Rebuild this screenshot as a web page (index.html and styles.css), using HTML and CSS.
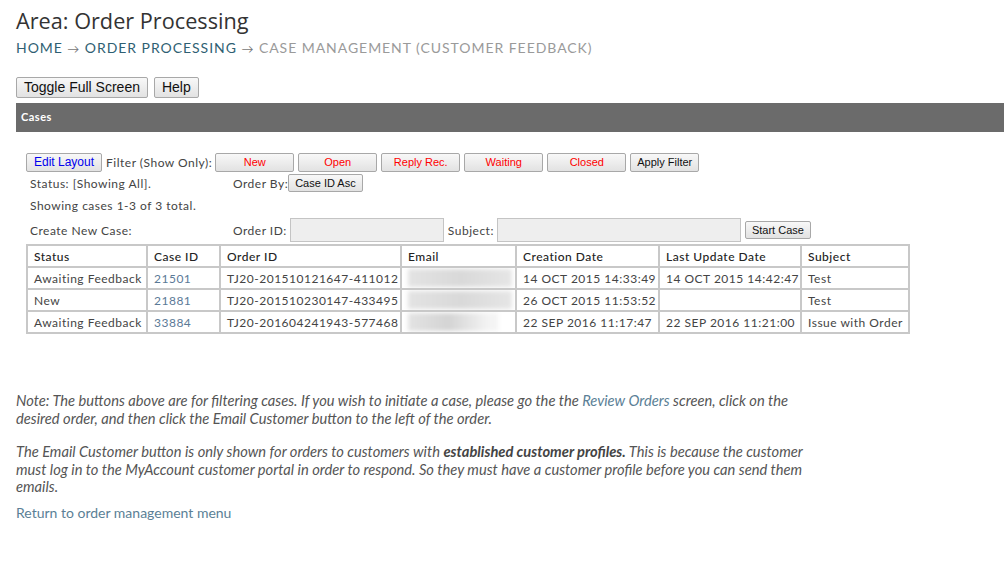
FILE: index.html
```html
<!DOCTYPE html>
<html lang="en">
<head>
    <meta charset="UTF-8">
    <title>Case Management</title>
    <link rel="stylesheet" href="styles.css">
</head>
<body>
<div class="page">
    <h1 class="title">Area: Order Processing</h1>
    <div class="crumbs">
        <a href="#">Home</a> <span class="arrow">&rarr;</span>
        <a href="#">Order Processing</a> <span class="arrow">&rarr;</span>
        <span class="current">Case Management (Customer Feedback)</span>
    </div>

    <div class="top-buttons">
        <button class="btn">Toggle Full Screen</button>
        <button class="btn">Help</button>
    </div>

    <div class="panel-head">Cases</div>

    <div class="panel-body">
        <div class="line filter-line">
            <button class="btn small blue">Edit Layout</button>
            <span class="filter-lbl">Filter (Show Only):</span>
            <button class="btn small red wide">New</button>
            <button class="btn small red wide">Open</button>
            <button class="btn small red wide">Reply Rec.</button>
            <button class="btn small red wide">Waiting</button>
            <button class="btn small red wide">Closed</button>
            <button class="btn small">Apply Filter</button>
        </div>
        <div class="line grid-line">
            <span class="lbl">Status: [Showing All].</span>
            <span>Order By:</span><button class="btn small">Case ID Asc</button>
        </div>
        <div class="line">Showing cases 1-3 of 3 total.</div>
        <div class="line grid-line create">
            <span class="lbl">Create New Case:</span>
            <span>Order ID:</span><input class="field order" type="text">
            <span>Subject:</span><input class="field subject" type="text">
            <button class="btn small">Start Case</button>
        </div>

        <table class="cases">
            <thead>
                <tr>
                    <th class="c-status">Status</th>
                    <th class="c-id">Case ID</th>
                    <th class="c-order">Order ID</th>
                    <th class="c-email">Email</th>
                    <th class="c-created">Creation Date</th>
                    <th class="c-updated">Last Update Date</th>
                    <th class="c-subject">Subject</th>
                </tr>
            </thead>
            <tbody>
                <tr>
                    <td>Awaiting Feedback</td>
                    <td><a href="#">21501</a></td>
                    <td>TJ20-201510121647-411012</td>
                    <td><div class="blur"></div></td>
                    <td>14 OCT 2015 14:33:49</td>
                    <td>14 OCT 2015 14:42:47</td>
                    <td>Test</td>
                </tr>
                <tr>
                    <td>New</td>
                    <td><a href="#">21881</a></td>
                    <td>TJ20-201510230147-433495</td>
                    <td><div class="blur"></div></td>
                    <td>26 OCT 2015 11:53:52</td>
                    <td></td>
                    <td>Test</td>
                </tr>
                <tr>
                    <td>Awaiting Feedback</td>
                    <td><a href="#">33884</a></td>
                    <td>TJ20-201604241943-577468</td>
                    <td><div class="blur short"></div></td>
                    <td>22 SEP 2016 11:17:47</td>
                    <td>22 SEP 2016 11:21:00</td>
                    <td>Issue with Order</td>
                </tr>
            </tbody>
        </table>
    </div>

    <div class="notes">
        <p>Note: The buttons above are for filtering cases. If you wish to initiate a case, please go the the <a href="#">Review Orders</a> screen, click on the desired order, and then click the Email Customer button to the left of the order.</p>
        <p>The Email Customer button is only shown for orders to customers with <b>established customer profiles.</b> This is because the customer must log in to the MyAccount customer portal in order to respond. So they must have a customer profile before you can send them emails.</p>
    </div>
    <a class="back" href="#">Return to order management menu</a>
</div>
</body>
</html>
```

FILE: styles.css
```css
body {
    margin: 0;
    background: #ffffff;
    font-family: Lato, "Open Sans", sans-serif;
    color: #444444;
    overflow: hidden;
}

.page {
    padding: 0 0 0 16px;
}

.title {
    font-family: "Open Sans", sans-serif;
    font-weight: normal;
    font-size: 21.7px;
    color: #333333;
    margin: 0;
    padding-top: 6px;
    line-height: 30px;
}

.crumbs {
    font-size: 14px;
    text-transform: uppercase;
    letter-spacing: 0.95px;
    line-height: 20px;
    margin-top: 2px;
}

.crumbs a {
    color: #2f5f73;
    text-decoration: none;
}

.crumbs .arrow {
    color: #777777;
    font-size: 12px;
}

.crumbs .current {
    color: #9a9a9a;
}

.top-buttons {
    display: flex;
    gap: 6px;
    margin-top: 18px;
}

.btn {
    font-family: "Liberation Sans", Arial, sans-serif;
    font-size: 14px;
    color: #111111;
    background: linear-gradient(#f8f8f8, #e2e2e2);
    border: 1px solid #a8a8a8;
    border-radius: 2px;
    padding: 0 7px;
    height: 21px;
    line-height: 19px;
    cursor: pointer;
}

.panel-head {
    background-color: #6b6b6b;
    color: #ffffff;
    font-size: 11px;
    font-weight: bold;
    letter-spacing: 0.5px;
    height: 29px;
    line-height: 28px;
    padding-left: 5px;
    margin-top: 5px;
}

.panel-body {
    padding: 21px 0 0 10px;
    font-size: 12px;
    letter-spacing: 0.5px;
}

.btn.small {
    font-size: 11px;
    height: 19px;
    line-height: 17px;
    padding: 0 6px;
    letter-spacing: 0;
}

.btn.blue {
    color: #0000ee;
    font-size: 12px;
    padding: 0 7px;
}

.btn.red {
    color: #ff0000;
}

.btn.wide {
    width: 79px;
}

.line {
    display: flex;
    align-items: center;
    height: 22px;
    padding-left: 4px;
}

.filter-line {
    height: 19px;
    padding-left: 0;
    gap: 4px;
}

.filter-lbl {
    margin-right: -1px;
}

.grid-line .btn.small {
    height: 18px;
}

.lbl {
    width: 203px;
}

.create {
    height: 28px;
}

.field {
    height: 24px;
    box-sizing: border-box;
    background: #eeeeee;
    border: 1px solid #c4c4c4;
    margin: 0 4px 0 3px;
}

.field.order {
    width: 154px;
}

.field.subject {
    width: 244px;
}

.cases {
    border-collapse: separate;
    border-spacing: 0;
    table-layout: fixed;
    width: 884px;
    margin-top: 0;
    border: 1px solid #c8c8c8;
}

.cases th,
.cases td {
    box-sizing: border-box;
    border: 1px solid #c8c8c8;
    text-align: left;
    font-weight: normal;
    height: 22px;
    padding: 0 0 0 6px;
    white-space: nowrap;
    overflow: hidden;
    color: #444444;
}

.cases th {
    color: #222222;
    font-weight: 500;
}

.cases a {
    color: #5b7a97;
    text-decoration: none;
}

.c-status { width: 120px; }
.c-id { width: 73px; }
.c-order { width: 181px; }
.c-email { width: 115px; }
.c-created { width: 143px; }
.c-updated { width: 142px; }
.c-subject { width: 108px; }

.blur {
    height: 18px;
    width: 104px;
    background: linear-gradient(90deg, #e3e3e3, #d9d9d9 50%, #e6e6e6);
    filter: blur(2px);
}

.blur.short {
    width: 90px;
    background: linear-gradient(90deg, #e3e3e3, #d4d4d4 45%, #f4f4f4 90%);
}

.notes {
    margin-top: 58px;
    font-style: italic;
    font-size: 14.7px;
    line-height: 17.5px;
    color: #555555;
    width: 815px;
}

.notes p {
    margin: 0 0 16px 0;
}

.notes a {
    color: #5b7f96;
    text-decoration: none;
}

.notes b {
    color: #444444;
}

.back {
    display: block;
    margin-top: -8px;
    font-size: 14px;
    color: #5b7f96;
    text-decoration: none;
}
```
